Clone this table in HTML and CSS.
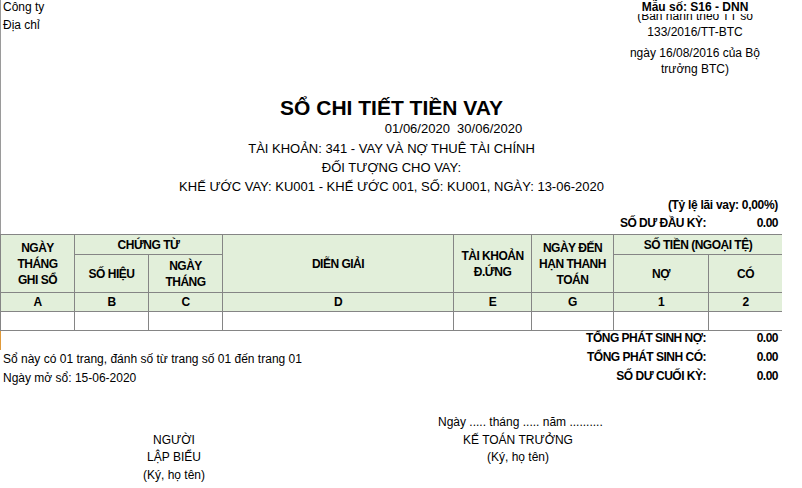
FILE: index.html
```html
<!DOCTYPE html>
<html lang="vi">
<head>
<meta charset="utf-8">
<title>Sổ chi tiết tiền vay</title>
<link rel="stylesheet" href="styles.css">
</head>
<body>
<div class="page">
  <div class="upper">
    <header class="top">
      <div class="company">
        <div class="company-line">Công ty</div>
        <div class="company-line second">Địa chỉ</div>
      </div>
      <div class="form-no">
        <div class="mau">Mẫu số: S16 - DNN</div>
        <div class="ban-hanh"><div>(Ban hành theo TT số</div><div>133/2016/TT-BTC</div></div>
        <div class="ngay-bh">ngày 16/08/2016 của Bộ<br>trưởng BTC)</div>
      </div>
    </header>

    <section class="titles">
      <h1 class="title">SỔ CHI TIẾT TIỀN VAY</h1>
      <div class="period">01/06/2020&nbsp; 30/06/2020</div>
      <div class="sub">TÀI KHOẢN: 341 - VAY VÀ NỢ THUÊ TÀI CHÍNH</div>
      <div class="sub">ĐỐI TƯỢNG CHO VAY:</div>
      <div class="sub">KHẾ ƯỚC VAY: KU001 - KHẾ ƯỚC 001, SỐ: KU001, NGÀY: 13-06-2020</div>
    </section>

    <section class="opening">
      <div class="rate">(Tỷ lệ lãi vay: 0,00%)</div>
      <div class="kv-row"><span class="kv-label">SỐ DƯ ĐẦU KỲ:</span><span class="kv-value">0.00</span></div>
    </section>
  </div>

  <table class="ledger">
    <colgroup>
      <col class="c74"><col class="c74"><col class="c74"><col class="c231"><col class="c78"><col class="c82"><col class="c95"><col class="c74">
    </colgroup>
    <thead>
      <tr class="h1">
        <th rowspan="2">NGÀY<br>THÁNG<br>GHI SỔ</th>
        <th colspan="2">CHỨNG TỪ</th>
        <th rowspan="2">DIỄN GIẢI</th>
        <th rowspan="2">TÀI KHOẢN<br>Đ.ỨNG</th>
        <th rowspan="2">NGÀY ĐẾN<br>HẠN THANH<br>TOÁN</th>
        <th colspan="2">SỐ TIỀN (NGOẠI TỆ)</th>
      </tr>
      <tr class="h2">
        <th>SỐ HIỆU</th>
        <th>NGÀY<br>THÁNG</th>
        <th>NỢ</th>
        <th>CÓ</th>
      </tr>
      <tr class="h3">
        <th>A</th><th>B</th><th>C</th><th>D</th><th>E</th><th>G</th><th>1</th><th>2</th>
      </tr>
    </thead>
    <tbody>
      <tr class="row">
        <td></td><td></td><td></td><td></td><td></td><td></td><td></td><td></td>
      </tr>
    </tbody>
  </table>

  <section class="totals">
    <div class="note marked"></div>
    <div class="kv-label">TỔNG PHÁT SINH NỢ:</div>
    <div class="kv-value">0.00</div>
    <div class="note">Sổ này có 01 trang, đánh số từ trang số 01 đến trang 01</div>
    <div class="kv-label">TỔNG PHÁT SINH CÓ:</div>
    <div class="kv-value">0.00</div>
    <div class="note">Ngày mở sổ: 15-06-2020</div>
    <div class="kv-label">SỐ DƯ CUỐI KỲ:</div>
    <div class="kv-value">0.00</div>
  </section>

  <section class="signs">
    <div class="sign sign-left">
      <div>&nbsp;</div>
      <div>NGƯỜI</div>
      <div>LẬP BIỂU</div>
      <div>(Ký, họ tên)</div>
    </div>
    <div class="sign sign-right">
      <div>Ngày ..... tháng ..... năm ..........</div>
      <div>KẾ TOÁN TRƯỞNG</div>
      <div>(Ký, họ tên)</div>
    </div>
  </section>
</div>
</body>
</html>
```

FILE: styles.css
```css
html, body {
  margin: 0;
  padding: 0;
  background: #ffffff;
}

body {
  font-family: "Liberation Sans", Arial, sans-serif;
  font-size: 12px;
  color: #000000;
  overflow: hidden;
}

.page {
  width: 782px;
  height: 488px;
  overflow: hidden;
}

.upper {
  border-left: 1px solid #9a9a9a;
}

/* ---------- top header ---------- */
.top {
  display: flex;
  justify-content: space-between;
  align-items: flex-start;
  height: 77px;
}

.company {
  padding-left: 2px;
}

.company-line {
  line-height: 14px;
}

.company-line.second {
  margin-top: 4px;
}

.form-no {
  width: 150px;
  margin-right: 12px;
  text-align: center;
  line-height: 16px;
}

.mau {
  font-weight: bold;
  line-height: 14px;
}

.ban-hanh {
  height: 26px;
  overflow: hidden;
  display: flex;
  flex-direction: column;
  justify-content: flex-end;
}

.ngay-bh {
  margin-top: 5px;
}

/* ---------- titles ---------- */
.titles {
  text-align: center;
  font-size: 13px;
  padding-top: 20px;
}

.title {
  margin: 0;
  font-size: 21px;
  line-height: 22px;
  font-weight: bold;
}

.period {
  line-height: 20px;
  padding-left: 124px;
}

.sub {
  line-height: 19px;
}

/* ---------- narrow bold text ---------- */
.rate,
.kv-label,
.kv-value,
.ledger th {
  font-family: "Liberation Sans", Arial, sans-serif;
  font-weight: bold;
  font-size: 12px;
  letter-spacing: -0.5px;
}

.opening {
  padding-right: 4px;
  padding-bottom: 2px;
}

.rate {
  text-align: right;
  line-height: 18px;
  letter-spacing: -0.3px;
}

.kv-row {
  display: flex;
  justify-content: flex-end;
  line-height: 18px;
}

.kv-row .kv-label {
  text-align: right;
}

.kv-row .kv-value {
  width: 72px;
  text-align: right;
}

/* ---------- table ---------- */
.ledger {
  width: 782px;
  border-collapse: collapse;
  table-layout: fixed;
}

.c74 { width: 74px; }
.c231 { width: 231px; }
.c78 { width: 78px; }
.c82 { width: 82px; }
.c95 { width: 95px; }

.ledger th,
.ledger td {
  border: 1px solid #858585;
  padding: 0;
  text-align: center;
  vertical-align: middle;
  line-height: 16px;
}

.ledger th {
  background: #e2efda;
}

.ledger .h1 { height: 20px; }
.ledger .h2 { height: 38px; }
.ledger .h3 { height: 19px; }
.ledger .row { height: 19px; }

/* ---------- totals ---------- */
.totals {
  display: grid;
  grid-template-columns: 1fr auto 72px;
  grid-auto-rows: 19px;
  padding-right: 4px;
}

.totals .kv-label,
.totals .kv-value {
  text-align: right;
  line-height: 15px;
}

.note {
  line-height: 19px;
  padding-left: 3px;
  white-space: nowrap;
}

.note.marked {
  border-left: 1px solid #e09a3a;
}

/* ---------- signatures ---------- */
.signs {
  display: flex;
  align-items: flex-start;
  padding-left: 134px;
  gap: 224px;
  margin-top: 26px;
}

.sign {
  text-align: center;
  line-height: 17.5px;
  white-space: nowrap;
}

.sign-left { width: 80px; }
.sign-right { width: 160px; }
```
